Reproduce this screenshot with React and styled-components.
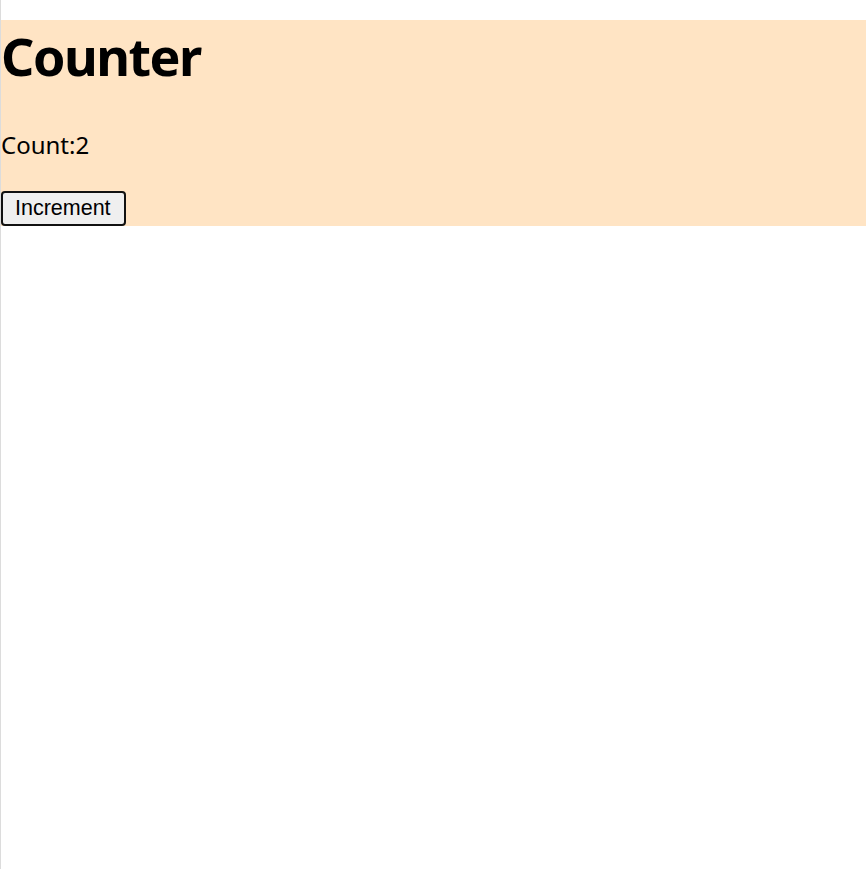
import React, { useState } from 'react';
import styled, { createGlobalStyle } from 'styled-components';

/* Global reset */
const GlobalStyle = createGlobalStyle`
   html, body {
      margin: 0;
      padding: 0;
      background: #fff;
   }
   body {
      font-family: "Noto Sans", "Open Sans", sans-serif;
      color: #000;
   }
`;

/* Page frame with the faint left edge */
const Page = styled.div`
   min-height: 100vh;
   box-sizing: border-box;
   border-left: 1px solid #dcdcdc;
   padding-top: 20px;
`;

/* Bisque counter panel */
const Panel = styled.section`
   display: flex;
   flex-direction: column;
   align-items: flex-start;
   background: #ffe4c4;
`;

const Title = styled.h1`
   margin: 0;
   font-size: 52px;
   line-height: 72px;
   font-weight: 700;
   letter-spacing: -1.5px;
`;

const CountText = styled.p`
   margin: 37px 0 30px;
   font-size: 24px;
   line-height: 32px;
`;

const Button = styled.button`
   margin: 0;
   padding: 4px 13px 4px 12px;
   font-family: "Liberation Sans", Arial, sans-serif;
   font-size: 21.5px;
   line-height: 23px;
   color: #000;
   background: #efefef;
   border: 2px solid #111;
   border-radius: 4px;
   cursor: pointer;
`;

const App = () => {
   const [count, setCount] = useState(2);

   return (
      <Page>
         <GlobalStyle />
         <Panel>
            <Title>Counter</Title>
            <CountText>Count:{count}</CountText>
            <Button onClick={() => setCount(count + 1)}>Increment</Button>
         </Panel>
      </Page>
   );
};

export default App;
